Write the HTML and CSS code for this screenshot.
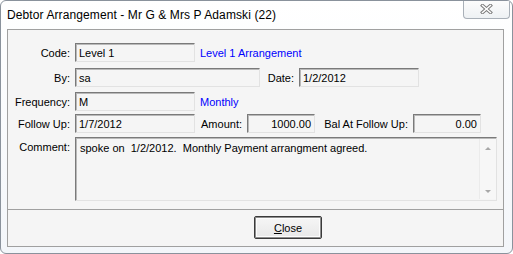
FILE: index.html
```html
<!DOCTYPE html>
<html lang="en">
<head>
    <meta charset="UTF-8">
    <title>Debtor Arrangement</title>
    <link rel="stylesheet" href="styles.css">
</head>
<body>
    <div class="window">
        <!-- Title bar -->
        <div class="titlebar">
            <span class="title">Debtor Arrangement - Mr G &amp; Mrs P Adamski (22)</span>
            <div class="close-x">
                <svg width="13" height="10" viewBox="0 0 13 10">
                    <path d="M2.5 1.5 L10.5 8.5 M10.5 1.5 L2.5 8.5" stroke="#7c7c7c" stroke-width="3.4" stroke-linecap="square" fill="none"/>
                    <path d="M2.5 1.5 L10.5 8.5 M10.5 1.5 L2.5 8.5" stroke="#ffffff" stroke-width="1.5" stroke-linecap="square" fill="none"/>
                </svg>
            </div>
        </div>

        <div class="panel">
            <div class="fields">
                <div class="row">
                    <label class="lbl">Code:</label>
                    <div class="field w120">Level 1</div>
                    <span class="desc">Level 1 Arrangement</span>
                </div>
                <div class="row gap6">
                    <label class="lbl">By:</label>
                    <div class="field w185">sa</div>
                    <label class="lbl lbl-date">Date:</label>
                    <div class="field w120">1/2/2012</div>
                </div>
                <div class="row">
                    <label class="lbl">Frequency:</label>
                    <div class="field w120">M</div>
                    <span class="desc">Monthly</span>
                </div>
                <div class="row gap3">
                    <label class="lbl">Follow Up:</label>
                    <div class="field w120">1/7/2012</div>
                    <label class="lbl lbl-amount">Amount:</label>
                    <div class="field w68 num">1000.00</div>
                    <label class="lbl lbl-bal">Bal At Follow Up:</label>
                    <div class="field w68 num">0.00</div>
                </div>
                <div class="row row-top gap4">
                    <label class="lbl">Comment:</label>
                    <div class="comment">
                        <div class="comment-text">spoke on&nbsp; 1/2/2012.&nbsp; Monthly Payment arrangment agreed.</div>
                        <div class="scroll">
                            <span class="arrow up"></span>
                            <span class="arrow down"></span>
                        </div>
                    </div>
                </div>
            </div>

            <div class="buttons">
                <button type="button" class="btn"><u>C</u>lose</button>
            </div>
        </div>
    </div>
</body>
</html>
```

FILE: styles.css
```css
body {
    margin: 0;
    font-family: "Liberation Sans", Arial, sans-serif;
    font-size: 11px;
    color: #000;
    background: #ffffff;
}

.window {
    width: 513px;
    height: 254px;
    box-sizing: border-box;
    border: 1px solid #8a929c;
    border-radius: 6px;
    background: linear-gradient(to bottom, #ffffff, #f3f6fa);
    padding: 0 8px 6px 6px;
    overflow: hidden;
}

.titlebar {
    height: 28px;
    display: flex;
    align-items: flex-start;
    justify-content: space-between;
}

.title {
    font-size: 12px;
    letter-spacing: 0.1px;
    margin-top: 7px;
    color: #000;
}

.close-x {
    width: 45px;
    height: 18px;
    margin-top: -1px;
    margin-right: -6px;
    border: 1px solid #a9b0b8;
    border-top: none;
    border-radius: 0 0 4px 4px;
    background: linear-gradient(to bottom, #fdfdfd, #eef1f4);
    display: flex;
    align-items: center;
    justify-content: center;
}

.panel {
    border: 1px solid #a0a0a0;
    background-color: #f5f5f5;
}

.fields {
    padding: 13px 0 8px 0;
    border-bottom: 1px solid #a0a0a0;
}

.row {
    display: flex;
    align-items: center;
    height: 19px;
}

.row + .row {
    margin-top: 5px;
}

.row.gap6 { margin-top: 6px; }
.row.gap3 { margin-top: 3px; }
.row.gap4 { margin-top: 4px; }

.row-top {
    align-items: flex-start;
    height: auto;
}

.lbl {
    width: 62px;
    text-align: right;
    padding-right: 5px;
    flex-shrink: 0;
}

.row-top .lbl {
    padding-top: 4px;
}

.lbl-date { width: 34px; }
.lbl-amount { width: 47px; }
.lbl-bal { width: 93px; }

.field {
    height: 19px;
    box-sizing: border-box;
    border: 1px solid;
    border-color: #7a7a7a #e2e2e2 #e2e2e2 #7a7a7a;
    box-shadow: inset 1px 1px 0 #b9b9b9;
    background-color: #f5f5f5;
    padding: 2px 3px 0 3px;
    line-height: 14px;
    white-space: nowrap;
    overflow: hidden;
}

.w120 { width: 120px; }
.w185 { width: 185px; }
.w68 { width: 68px; }

.num {
    text-align: right;
}

.desc {
    color: #0000ff;
    margin-left: 5px;
}

.comment {
    width: 422px;
    height: 64px;
    box-sizing: border-box;
    border: 1px solid;
    border-color: #7a7a7a #e2e2e2 #e2e2e2 #7a7a7a;
    box-shadow: inset 1px 1px 0 #b9b9b9;
    display: flex;
}

.comment-text {
    flex: 1;
    padding: 4px 4px 0 4px;
    line-height: 13px;
}

.scroll {
    width: 16px;
    margin: 1px 0;
    border-left: 1px solid #ebebeb;
    background-color: #f7f7f7;
    display: flex;
    flex-direction: column;
    justify-content: space-between;
    align-items: center;
    padding: 8px 0 6px 0;
}

.arrow {
    width: 0;
    height: 0;
    border-left: 3px solid transparent;
    border-right: 3px solid transparent;
}

.arrow.up {
    border-bottom: 3px solid #a8a8a8;
}

.arrow.down {
    border-top: 3px solid #a8a8a8;
}

.buttons {
    padding: 6px 0 7px 246px;
}

.btn {
    display: block;
    width: 68px;
    height: 23px;
    font-family: "Liberation Sans", Arial, sans-serif;
    font-size: 11px;
    color: #000;
    border: 1px solid #3a3a3a;
    box-shadow: inset 0 0 0 1px #8e8e8e, inset 0 0 0 2px #fcfcfc;
    border-radius: 2px;
    background: linear-gradient(to bottom, #f6f6f6, #e8e8e8);
    padding: 0;
    cursor: pointer;
}
```
